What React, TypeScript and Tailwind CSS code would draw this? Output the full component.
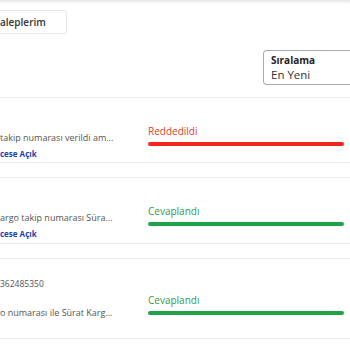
const rows = [
  {
    h: "h-[66px]",
    mb: "mb-[14px]",
    leftPt: "pt-[32px]",
    lines: [{ text: "takip numarası verildi am...", kind: "desc" }, { text: "cese Açık", kind: "link" }],
    rightPt: "pt-[26px]",
    status: "Reddedildi",
    text: "text-[#dc3b2c]",
    bar: "bg-[#f3281b]",
  },
  {
    h: "h-[67px]",
    mb: "mb-[14px]",
    leftPt: "pt-[32px]",
    lines: [{ text: "argo takip numarası Süra...", kind: "desc" }, { text: "cese Açık", kind: "link" }],
    rightPt: "pt-[26px]",
    status: "Cevaplandı",
    text: "text-[#2f9a4b]",
    bar: "bg-[#1fa346]",
  },
  {
    h: "h-[81px]",
    mb: "",
    leftPt: "pt-[17px]",
    lines: [{ text: "362485350", kind: "no" }, { text: "o numarası ile Sürat Karg...", kind: "desc" }],
    rightPt: "pt-[34px]",
    status: "Cevaplandı",
    text: "text-[#2f9a4b]",
    bar: "bg-[#1fa346]",
  },
];

function Line({ text, kind }: { text: string; kind: string }) {
  if (kind === "link") {
    return <div className="text-[8px] leading-[15px] font-bold text-[#1d3fa8]">{text}</div>;
  }
  if (kind === "no") {
    return <div className="text-[8.5px] leading-[16px] text-[#555] mb-[13px]">{text}</div>;
  }
  return <div className="text-[9px] leading-[16px] text-[#555]">{text}</div>;
}

export default function App() {
  return (
    <div className="w-[350px] h-[350px] overflow-hidden bg-white" style={{ fontFamily: "'Open Sans', sans-serif" }}>
      <div className="h-[4px] bg-gradient-to-b from-[#e6e6e6] to-white" />

      <div className="mt-[6px] w-[67px] h-[24px] border border-l-0 border-[#e8e8e8] rounded-r-[3px] flex items-center">
        <span className="text-[10px] font-semibold text-[#333]">aleplerim</span>
      </div>

      <div className="flex justify-end mt-[16px]">
        <div className="w-[87px] h-[35px] border border-r-0 border-[#ababab] rounded-l-[4px] pl-[7px] pt-[2px]">
          <div className="text-[10px] leading-[14px] font-bold text-[#222]">Sıralama</div>
          <div className="text-[11.5px] leading-[16px] text-[#333]">En Yeni</div>
        </div>
      </div>

      <div className="mt-[12px]">
        {rows.map((r, i) => (
          <div key={i} className={`${r.h} ${r.mb} border-y border-[#ededed] flex`}>
            <div className={`w-[148px] ${r.leftPt}`}>
              {r.lines.map((l, j) => (
                <Line key={j} text={l.text} kind={l.kind} />
              ))}
            </div>
            <div className={`flex-1 pr-[6px] ${r.rightPt}`}>
              <div className={`text-[10px] leading-[14px] font-medium ${r.text}`}>{r.status}</div>
              <div className={`mt-[4px] h-[4px] rounded-full ${r.bar}`} />
            </div>
          </div>
        ))}
      </div>
    </div>
  );
}
